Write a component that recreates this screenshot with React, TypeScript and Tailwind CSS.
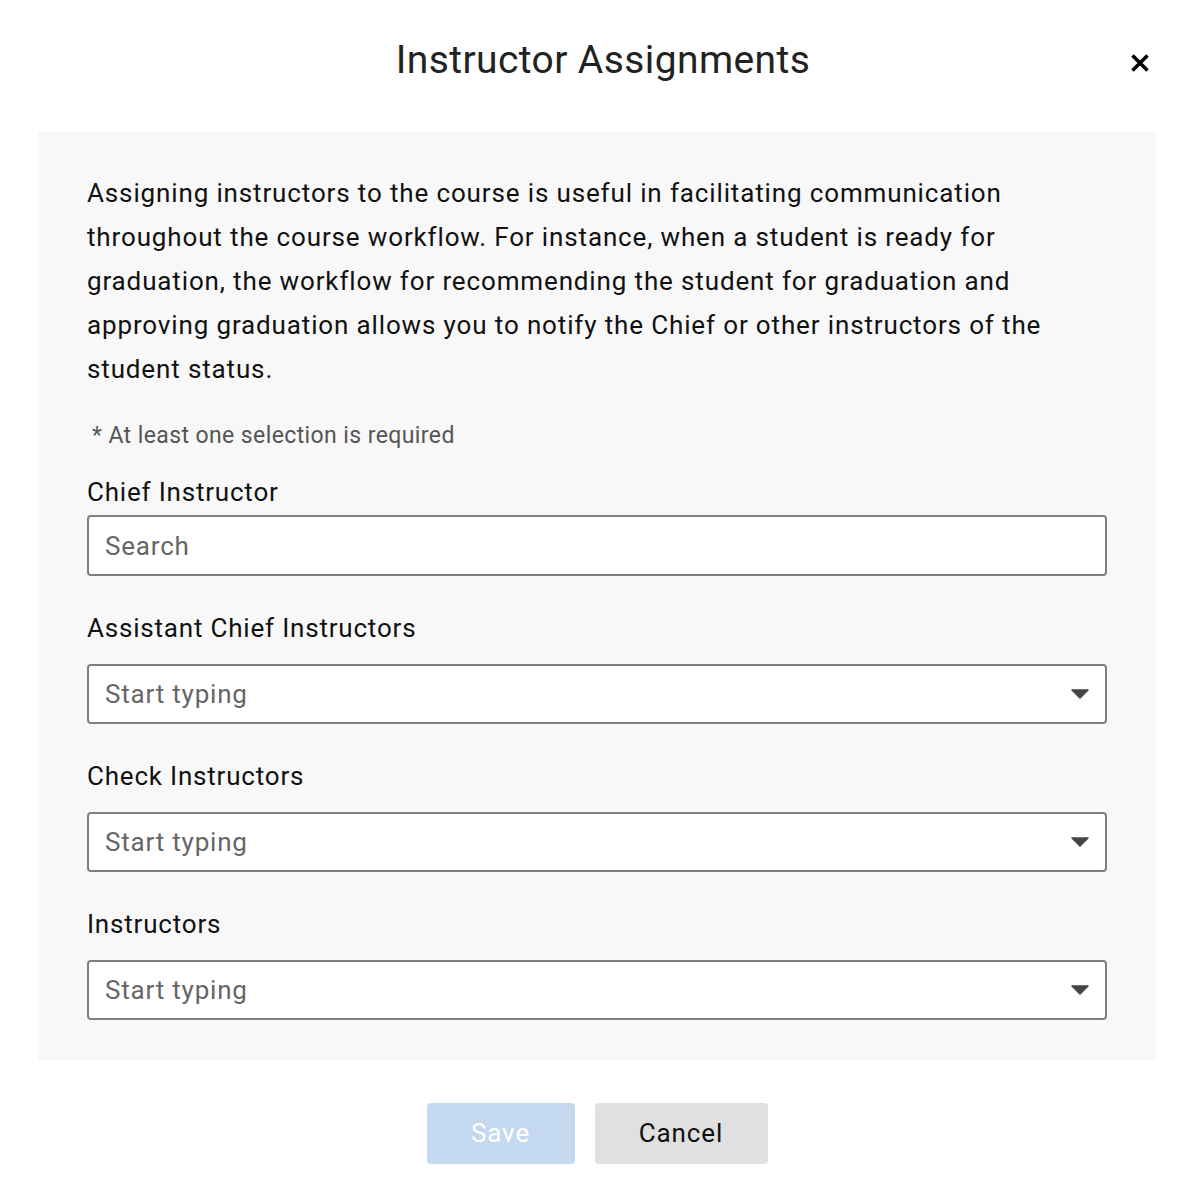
import { useState } from 'react';

const font = { fontFamily: 'Roboto, "Liberation Sans", sans-serif' };

function Caret() {
  return (
    <svg width="18" height="10" viewBox="0 0 18 10" className="shrink-0">
      <path d="M1 1h16l-8 8z" fill="#444" stroke="#444" strokeWidth="1.5" strokeLinejoin="round" />
    </svg>
  );
}

function SelectField({ label, placeholder }: { label: string; placeholder: string }) {
  const [value, setValue] = useState('');
  return (
    <div className="mt-[34px]">
      <label className="block text-[26px] leading-[36px] tracking-[0.8px] text-[#111]">{label}</label>
      <div className="mt-[18px] flex h-[60px] items-center rounded-[4px] border-2 border-[#7f7f7f] bg-white pl-[16px] pr-[16px]">
        <input
          value={value}
          onChange={(e) => setValue(e.target.value)}
          placeholder={placeholder}
          className="h-full min-w-0 flex-1 bg-transparent text-[26px] tracking-[0.8px] text-[#222] outline-none placeholder:text-[#666]"
        />
        <Caret />
      </div>
    </div>
  );
}

export default function App() {
  const [chief, setChief] = useState('');
  return (
    <div className="min-h-[1202px] w-[1190px] bg-white" style={font}>
      <div className="relative flex h-[132px] items-start justify-center pl-[16px] pt-[36px]">
        <h1 className="text-[39px] leading-[48px] tracking-[0.4px] text-[#222]">Instructor Assignments</h1>
        <button className="absolute right-[38px] top-[51px] p-[2px]" aria-label="Close">
          <svg width="20" height="20" viewBox="0 0 20 20">
            <path d="M2.5 2.5l15 15M17.5 2.5l-15 15" stroke="#000" strokeWidth="3.6" />
          </svg>
        </button>
      </div>

      <div className="ml-[38px] w-[1118px] bg-[#f8f8f8] px-[49px] pb-[40px] pt-[39px]">
        <p className="text-[26px] leading-[44px] tracking-[0.86px] text-[#111]">
          Assigning instructors to the course is useful in facilitating communication throughout the
          course workflow. For instance, when a student is ready for graduation, the workflow for
          recommending the student for graduation and approving graduation allows you to notify the
          Chief or other instructors of the student status.
        </p>
        <p className="mt-[30px] pl-[5px] text-[23px] leading-[30px] tracking-[0.4px] text-[#555]">
          * At least one selection is required
        </p>

        <div className="mt-[23px]">
          <label className="block text-[26px] leading-[36px] tracking-[0.8px] text-[#111]">Chief Instructor</label>
          <div className="mt-[5px] flex h-[61px] items-center rounded-[4px] border-2 border-[#7f7f7f] bg-white px-[16px]">
            <input
              value={chief}
              onChange={(e) => setChief(e.target.value)}
              placeholder="Search"
              className="h-full min-w-0 flex-1 bg-transparent text-[26px] tracking-[0.8px] text-[#222] outline-none placeholder:text-[#666]"
            />
          </div>
        </div>

        <SelectField label="Assistant Chief Instructors" placeholder="Start typing" />
        <SelectField label="Check Instructors" placeholder="Start typing" />
        <SelectField label="Instructors" placeholder="Start typing" />
      </div>

      <div className="ml-[38px] flex w-[1118px] justify-center gap-[20px] pt-[43px]">
        <button
          disabled
          className="h-[61px] w-[148px] rounded-[4px] bg-[#c4d9f0] text-[26px] tracking-[0.9px] text-white"
        >
          Save
        </button>
        <button className="h-[61px] w-[173px] rounded-[4px] bg-[#e0e0e0] text-[26px] tracking-[0.9px] text-[#111]">
          Cancel
        </button>
      </div>
    </div>
  );
}
